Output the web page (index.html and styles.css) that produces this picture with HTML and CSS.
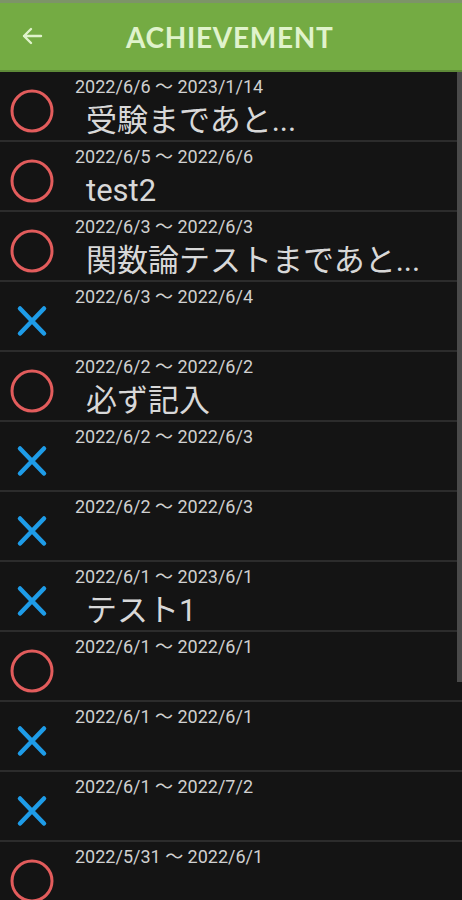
FILE: index.html
```html
<!DOCTYPE html>
<html>
<head>
<meta charset="UTF-8">
<title>ACHIEVEMENT</title>
<link rel="stylesheet" href="styles.css">
</head>
<body>
  <div class="status-strip"></div>
  <div class="app-bar">
    <svg class="back" width="24" height="24" viewBox="0 0 24 24">
      <path d="M21 12H4M11 5l-7 7 7 7" fill="none" stroke="#e0f3cc" stroke-width="2.4" stroke-linecap="round" stroke-linejoin="round"/>
    </svg>
    <h1>ACHIEVEMENT</h1>
  </div>

  <div class="list-container">
    <ul class="goal-list">
      <li class="item">
        <span class="mark"><svg width="44" height="44"><circle cx="22" cy="22" r="20" class="ok"/></svg></span>
        <div class="text"><div class="period">2022/6/6 ～ 2023/1/14</div><div class="name">受験まであと...</div></div>
      </li>
      <li class="item">
        <span class="mark"><svg width="44" height="44"><circle cx="22" cy="22" r="20" class="ok"/></svg></span>
        <div class="text"><div class="period">2022/6/5 ～ 2022/6/6</div><div class="name">test2</div></div>
      </li>
      <li class="item">
        <span class="mark"><svg width="44" height="44"><circle cx="22" cy="22" r="20" class="ok"/></svg></span>
        <div class="text"><div class="period">2022/6/3 ～ 2022/6/3</div><div class="name">関数論テストまであと...</div></div>
      </li>
      <li class="item">
        <span class="mark"><svg width="44" height="44"><path d="M10 9.5l24 25M34 9.5l-24 25" class="ng"/></svg></span>
        <div class="text"><div class="period">2022/6/3 ～ 2022/6/4</div></div>
      </li>
      <li class="item">
        <span class="mark"><svg width="44" height="44"><circle cx="22" cy="22" r="20" class="ok"/></svg></span>
        <div class="text"><div class="period">2022/6/2 ～ 2022/6/2</div><div class="name">必ず記入</div></div>
      </li>
      <li class="item">
        <span class="mark"><svg width="44" height="44"><path d="M10 9.5l24 25M34 9.5l-24 25" class="ng"/></svg></span>
        <div class="text"><div class="period">2022/6/2 ～ 2022/6/3</div></div>
      </li>
      <li class="item">
        <span class="mark"><svg width="44" height="44"><path d="M10 9.5l24 25M34 9.5l-24 25" class="ng"/></svg></span>
        <div class="text"><div class="period">2022/6/2 ～ 2022/6/3</div></div>
      </li>
      <li class="item">
        <span class="mark"><svg width="44" height="44"><path d="M10 9.5l24 25M34 9.5l-24 25" class="ng"/></svg></span>
        <div class="text"><div class="period">2022/6/1 ～ 2023/6/1</div><div class="name">テスト1</div></div>
      </li>
      <li class="item">
        <span class="mark"><svg width="44" height="44"><circle cx="22" cy="22" r="20" class="ok"/></svg></span>
        <div class="text"><div class="period">2022/6/1 ～ 2022/6/1</div></div>
      </li>
      <li class="item">
        <span class="mark"><svg width="44" height="44"><path d="M10 9.5l24 25M34 9.5l-24 25" class="ng"/></svg></span>
        <div class="text"><div class="period">2022/6/1 ～ 2022/6/1</div></div>
      </li>
      <li class="item">
        <span class="mark"><svg width="44" height="44"><path d="M10 9.5l24 25M34 9.5l-24 25" class="ng"/></svg></span>
        <div class="text"><div class="period">2022/6/1 ～ 2022/7/2</div></div>
      </li>
      <li class="item">
        <span class="mark"><svg width="44" height="44"><circle cx="22" cy="22" r="20" class="ok"/></svg></span>
        <div class="text"><div class="period">2022/5/31 ～ 2022/6/1</div></div>
      </li>
    </ul>
    <div class="scrollbar"></div>
  </div>
</body>
</html>
```

FILE: styles.css
```css
body {
  margin: 0;
  height: 900px;
  overflow: hidden;
  background-color: #141414;
  font-family: Roboto, "Noto Sans CJK JP", sans-serif;
}

.status-strip {
  height: 3px;
  background-color: #7d9468;
}

.app-bar {
  height: 67px;
  display: flex;
  align-items: center;
  background-color: #74ab43;
  border-bottom: 2px solid #5e8a38;
}

.back {
  margin-left: 20px;
  margin-top: -2px;
}

.app-bar h1 {
  margin: 0 0 0 82px;
  font-family: Lato, sans-serif;
  font-weight: 700;
  font-size: 28px;
  letter-spacing: 0.7px;
  color: #e0f3cc;
}

.list-container {
  position: relative;
}

.goal-list {
  list-style: none;
  margin: 0;
  padding: 0;
}

.item {
  display: flex;
  height: 68px;
  border-bottom: 2px solid #2c2c2c;
}

.mark {
  flex: 0 0 64px;
  display: flex;
  justify-content: center;
  padding-top: 17px;
}

.mark .ok {
  fill: none;
  stroke: #e25c5c;
  stroke-width: 3;
}

.mark .ng {
  fill: none;
  stroke: #1e9ce8;
  stroke-width: 4.5;
  stroke-linecap: round;
}

.text {
  margin-left: 11px;
  padding-top: 4px;
}

.period {
  font-size: 18px;
  line-height: 21px;
  color: #d0d0d0;
}

.name {
  margin-top: 6px;
  padding-left: 11px;
  font-size: 31px;
  line-height: 36px;
  color: #d8d8d8;
  white-space: nowrap;
}

/* 右側のスクロールバー */
.scrollbar {
  position: absolute;
  top: 0;
  right: 0;
  width: 5px;
  height: 610px;
  background-color: #4a4a4a;
}
```
